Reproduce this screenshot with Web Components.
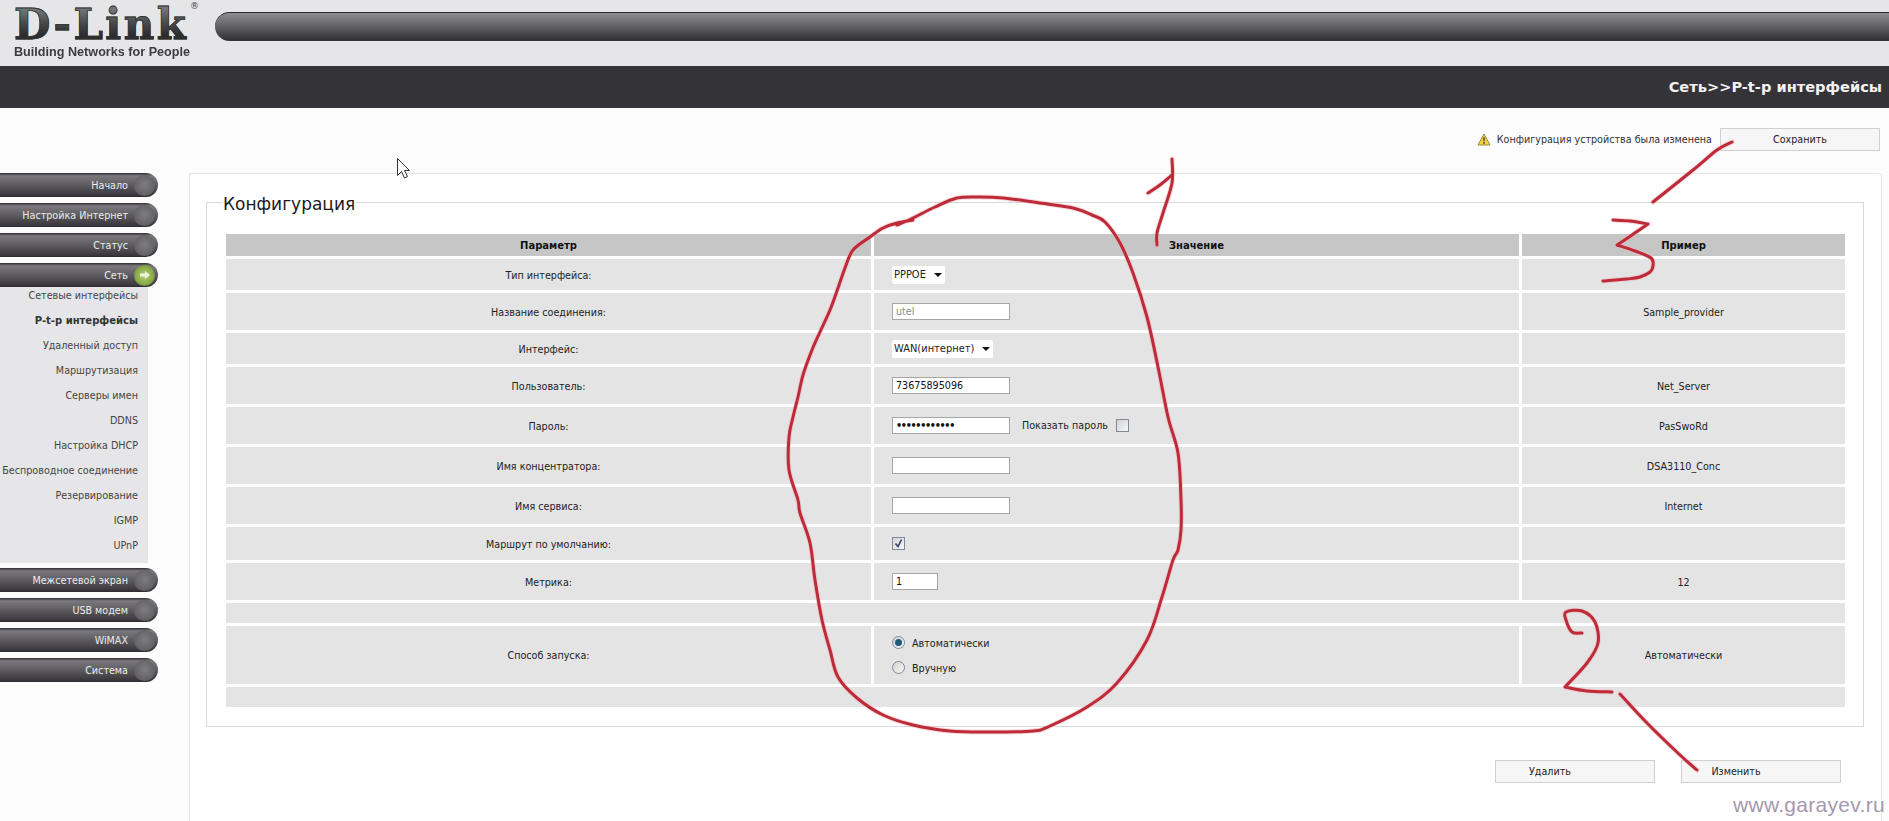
<!DOCTYPE html>
<html lang="ru">
<head>
<meta charset="utf-8">
<title>D-Link</title>
<style>
    html, body { margin: 0; height: 821px; overflow: hidden; background: #fcfcfc; }
    body { font: 9.6px "DejaVu Sans", sans-serif; color: #222; position: relative; }
    .page { display: grid; grid-template-columns: 189px 1fr; }
    .dots { font-weight: bold; letter-spacing: -1.3px; }
</style>
</head>
<body>
<router-header title="Сеть>>P-t-p интерфейсы"></router-header>
<div class="page">
    <side-menu>
        <nav-pill>Начало</nav-pill>
        <nav-pill>Настройка Интернет</nav-pill>
        <nav-pill>Статус</nav-pill>
        <nav-pill active>Сеть</nav-pill>
        <sub-menu>
            <sub-item>Сетевые интерфейсы</sub-item>
            <sub-item active>P-t-p интерфейсы</sub-item>
            <sub-item>Удаленный доступ</sub-item>
            <sub-item>Маршрутизация</sub-item>
            <sub-item>Серверы имен</sub-item>
            <sub-item>DDNS</sub-item>
            <sub-item>Настройка DHCP</sub-item>
            <sub-item>Беспроводное соединение</sub-item>
            <sub-item>Резервирование</sub-item>
            <sub-item>IGMP</sub-item>
            <sub-item>UPnP</sub-item>
        </sub-menu>
        <nav-pill>Межсетевой экран</nav-pill>
        <nav-pill>USB модем</nav-pill>
        <nav-pill>WiMAX</nav-pill>
        <nav-pill>Система</nav-pill>
    </side-menu>
    <config-page>
        <save-notice>Конфигурация устройства была изменена</save-notice>
        <config-panel legend="Конфигурация">
            <config-row head h="22" label="Параметр" example="Пример">Значение</config-row>
            <config-row h="31" label="Тип интерфейса:"><drop-down w="53">PPPOE</drop-down></config-row>
            <config-row h="37" label="Название соединения:" example="Sample_provider"><text-field muted>utel</text-field></config-row>
            <config-row h="31" label="Интерфейс:"><drop-down w="101">WAN(интернет)</drop-down></config-row>
            <config-row h="37" label="Пользователь:" example="Net_Server"><text-field>73675895096</text-field></config-row>
            <config-row h="37" label="Пароль:" example="PasSwoRd"><text-field><span class="dots">••••••••••••</span></text-field><span style="margin-left:12px">Показать пароль</span><check-box style="margin-left:8px"></check-box></config-row>
            <config-row h="37" label="Имя концентратора:" example="DSA3110_Conc"><text-field></text-field></config-row>
            <config-row h="37" label="Имя сервиса:" example="Internet"><text-field></text-field></config-row>
            <config-row h="33" label="Маршрут по умолчанию:"><check-box checked></check-box></config-row>
            <config-row h="37" label="Метрика:" example="12"><text-field w="46">1</text-field></config-row>
            <config-row h="20" wide></config-row>
            <config-row h="58" label="Способ запуска:" example="Автоматически">
                <radio-group>
                    <radio-option checked>Автоматически</radio-option>
                    <radio-option>Вручную</radio-option>
                </radio-group>
            </config-row>
            <config-row h="20" wide></config-row>
            <action-bar slot="actions">
                <action-button shifted>Удалить</action-button>
                <action-button shifted>Изменить</action-button>
            </action-bar>
        </config-panel>
    </config-page>
</div>
<ink-marks></ink-marks>
<site-mark>www.garayev.ru</site-mark>

<script>
class RouterHeader extends HTMLElement {
    constructor() {
        super();
        this.attachShadow({ mode: 'open' });
        this.shadowRoot.innerHTML = `
            <style>
                :host { display: block; }
                .top { height: 66px; background: #e6e6e8; display: flex; align-items: flex-start; box-sizing: border-box; }
                .logo { width: 215px; flex: none; box-sizing: border-box; padding: 0 0 0 14px; position: relative; }
                .word {
                    font: bold 42px/49px "DejaVu Serif", serif;
                    height: 44px;
                    letter-spacing: 2.4px;
                    background: linear-gradient(#77777a 20%, #4c4c4e 50%, #2c2c2e 80%);
                    -webkit-background-clip: text;
                    background-clip: text;
                    color: transparent;
                    -webkit-text-stroke: 0.8px #333;
                    white-space: nowrap;
                }
                .reg { position: absolute; left: 190px; top: 1px; font: 9px "DejaVu Sans", sans-serif; color: #444; }
                .tag {
                    font: bold 13.5px/15px "Liberation Sans", sans-serif;
                    color: #3c3c3e;
                    white-space: nowrap;
                    transform: scaleX(.935);
                    transform-origin: 0 0;
                }
                .pill {
                    flex: 1;
                    height: 29px;
                    margin-top: 12px;
                    border-radius: 15px 0 0 15px;
                    border-top: 1px solid #2a2a2c;
                    box-sizing: border-box;
                    background: linear-gradient(#8d8d90, #6a6a6c 40%, #333335 95%);
                }
                .title {
                    height: 42px;
                    background: #343438;
                    color: #f2f2f2;
                    font: bold 14.6px/42px "DejaVu Sans", sans-serif;
                    text-align: right;
                    padding-right: 7px;
                }
            </style>
            <div class="top">
                <div class="logo">
                    <div class="word">D-Link</div>
                    <span class="reg">®</span>
                    <div class="tag">Building Networks for People</div>
                </div>
                <div class="pill"></div>
            </div>
            <div class="title"></div>
        `;
    }

    connectedCallback() {
        this.shadowRoot.querySelector('.title').textContent = this.getAttribute('title');
    }
}

class SideMenu extends HTMLElement {
    constructor() {
        super();
        this.attachShadow({ mode: 'open' });
        this.shadowRoot.innerHTML = `
            <style>
                :host { display: block; padding-top: 65px; width: 158px; }
            </style>
            <slot></slot>
        `;
    }
}

class NavPill extends HTMLElement {
    constructor() {
        super();
        this.attachShadow({ mode: 'open' });
        this.shadowRoot.innerHTML = `
            <style>
                :host {
                    display: flex;
                    align-items: center;
                    justify-content: flex-end;
                    height: 24px;
                    margin-bottom: 6px;
                    padding-right: 3px;
                    box-sizing: border-box;
                    border-radius: 0 13px 13px 0;
                    background: linear-gradient(#2f2d31, #7b797d 12%, #6a686c 35%, #3a383c 92%, #2c2a2e);
                    color: #ececec;
                    font: 9.6px "DejaVu Sans", sans-serif;
                }
                :host([active]) { margin-bottom: 0; }
                .dot {
                    width: 21px;
                    height: 21px;
                    margin-left: 6px;
                    border-radius: 50%;
                    background: radial-gradient(circle at 50% 45%, #7d7c7f, #636165 70%, #504e52);
                    display: flex;
                    align-items: center;
                    justify-content: center;
                }
                :host([active]) .dot { background: radial-gradient(circle at 50% 50%, #b7d27a, #86a846 60%, #50702a); }
                svg { display: none; }
                :host([active]) svg { display: block; }
            </style>
            <slot></slot>
            <span class="dot"><svg width="12" height="10" viewBox="0 0 12 10"><path d="M1 3.5h5V1l5 4-5 4V6.5H1z" fill="#eef5d8"/></svg></span>
        `;
    }
}

class SubMenu extends HTMLElement {
    constructor() {
        super();
        this.attachShadow({ mode: 'open' });
        this.shadowRoot.innerHTML = `
            <style>
                :host { display: block; width: 148px; height: 276px; margin-bottom: 5px; background: #e6e6e8; box-sizing: border-box; padding-right: 10px; }
            </style>
            <slot></slot>
        `;
    }
}

class SubItem extends HTMLElement {
    constructor() {
        super();
        this.attachShadow({ mode: 'open' });
        this.shadowRoot.innerHTML = `
            <style>
                :host { display: block; height: 25px; line-height: 18px; text-align: right; color: #444; white-space: nowrap; }
                :host([active]) { font-weight: bold; font-size: 10px; color: #333; }
            </style>
            <slot></slot>
        `;
    }
}

class ConfigPage extends HTMLElement {
    constructor() {
        super();
        this.attachShadow({ mode: 'open' });
        this.shadowRoot.innerHTML = `
            <style>
                :host { display: block; padding: 20px 7px 0 0; }
            </style>
            <slot></slot>
        `;
    }
}

class SaveNotice extends HTMLElement {
    constructor() {
        super();
        this.attachShadow({ mode: 'open' });
        this.shadowRoot.innerHTML = `
            <style>
                :host { display: flex; align-items: center; justify-content: flex-end; height: 23px; margin-bottom: 22px; margin-right: 2px; color: #333; }
                svg { margin-right: 6px; }
                .msg { margin-right: 8px; }
            </style>
            <svg width="14" height="13" viewBox="0 0 14 13">
                <path d="M7 1L13 12H1z" fill="#f3d348" stroke="#9a8a3a" stroke-linejoin="round"/>
                <path d="M6.3 4.5h1.4l-.3 4h-.8zM6.3 9.3h1.4v1.4H6.3z" fill="#222"/>
            </svg>
            <span class="msg"><slot></slot></span>
            <action-button>Сохранить</action-button>
        `;
    }
}

class ConfigPanel extends HTMLElement {
    constructor() {
        super();
        this.attachShadow({ mode: 'open' });
        this.shadowRoot.innerHTML = `
            <style>
                :host {
                    display: block;
                    height: 648px;
                    box-sizing: border-box;
                    background: #fff;
                    border: 1px solid #e6e6e6;
                    border-bottom: 0;
                    border-radius: 3px 3px 0 0;
                    padding: 16px 17px 0 16px;
                }
                fieldset {
                    margin: 0;
                    padding: 20px 18px 19px 19px;
                    border: 1px solid #d9d9d9;
                    display: flex;
                    flex-direction: column;
                    gap: 3px;
                }
                legend {
                    font: 17px/20px "DejaVu Sans", sans-serif;
                    color: #1a1a1a;
                    padding: 4px 1px 0;
                    margin-left: -4px;
                }
            </style>
            <fieldset>
                <legend></legend>
                <slot></slot>
            </fieldset>
            <slot name="actions"></slot>
        `;
    }

    connectedCallback() {
        this.shadowRoot.querySelector('legend').textContent = this.getAttribute('legend');
    }
}

class ConfigRow extends HTMLElement {
    constructor() {
        super();
        this.attachShadow({ mode: 'open' });
        this.shadowRoot.innerHTML = `
            <style>
                :host {
                    display: grid;
                    grid-template-columns: 645px 645px 323px;
                    column-gap: 3px;
                    color: #222;
                }
                .cell { background: #e4e4e5; display: flex; align-items: center; justify-content: center; white-space: nowrap; }
                .label, .example { padding-top: 1px; box-sizing: border-box; }
                .value { justify-content: flex-start; padding-left: 18px; }
                :host([head]) { font-weight: bold; font-size: 10px; color: #111; }
                :host([head]) .cell { background: #c6c6c7; }
                :host([head]) .value { justify-content: center; padding: 1px 0 0; }
                :host([wide]) { grid-template-columns: 1fr; }
                :host([wide]) .value, :host([wide]) .example { display: none; }
            </style>
            <div class="cell label"></div>
            <div class="cell value"><slot></slot></div>
            <div class="cell example"></div>
        `;
    }

    connectedCallback() {
        this.style.height = this.getAttribute('h') + 'px';
        this.shadowRoot.querySelector('.label').textContent = this.getAttribute('label') || '';
        this.shadowRoot.querySelector('.example').textContent = this.getAttribute('example') || '';
    }
}

class DropDown extends HTMLElement {
    constructor() {
        super();
        this.attachShadow({ mode: 'open' });
        this.shadowRoot.innerHTML = `
            <style>
                :host { display: flex; align-items: center; justify-content: space-between; height: 18px; box-sizing: border-box; padding: 0 3px 0 2px; background: #fff; color: #222; font-size: 9.9px; border-radius: 2px; }
                i { width: 0; height: 0; border: 4px solid transparent; border-top: 4px solid #111; border-bottom: 0; }
            </style>
            <slot></slot><i></i>
        `;
    }

    connectedCallback() {
        this.style.width = this.getAttribute('w') + 'px';
    }
}

class TextField extends HTMLElement {
    constructor() {
        super();
        this.attachShadow({ mode: 'open' });
        this.shadowRoot.innerHTML = `
            <style>
                :host {
                    display: block;
                    width: 118px;
                    height: 17px;
                    line-height: 15px;
                    box-sizing: border-box;
                    padding-left: 3px;
                    background: #fff;
                    border: 1px solid #a6a6a6;
                    color: #111;
                }
                :host([muted]) { color: #8a8a8a; }
            </style>
            <slot></slot>
        `;
    }

    connectedCallback() {
        if (this.hasAttribute('w')) this.style.width = this.getAttribute('w') + 'px';
    }
}

class CheckBox extends HTMLElement {
    constructor() {
        super();
        this.attachShadow({ mode: 'open' });
        this.shadowRoot.innerHTML = `
            <style>
                :host { display: block; width: 13px; height: 13px; box-sizing: border-box; border: 1px solid #7f8a98; background: linear-gradient(135deg, #d4d4d6, #f6f6f6); }
                svg { display: none; }
                :host([checked]) svg { display: block; }
            </style>
            <svg width="11" height="11" viewBox="0 0 11 11"><path d="M2.5 5.5L5 8.5 8.5 1.5" fill="none" stroke="#2f4468" stroke-width="1.6"/></svg>
        `;
    }
}

class RadioGroup extends HTMLElement {
    constructor() {
        super();
        this.attachShadow({ mode: 'open' });
        this.shadowRoot.innerHTML = `
            <style>
                :host { display: flex; flex-direction: column; gap: 12px; }
            </style>
            <slot></slot>
        `;
    }
}

class RadioOption extends HTMLElement {
    constructor() {
        super();
        this.attachShadow({ mode: 'open' });
        this.shadowRoot.innerHTML = `
            <style>
                :host { display: flex; align-items: center; gap: 7px; height: 13px; }
                b { width: 13px; height: 13px; box-sizing: border-box; border-radius: 50%; border: 1px solid #7f8a98; background: linear-gradient(135deg, #d2d2d4, #f6f6f6); display: flex; align-items: center; justify-content: center; }
                :host([checked]) b::after { content: ""; width: 7px; height: 7px; border-radius: 50%; background: #1f5a78; }
                span { padding-top: 1px; }
            </style>
            <b></b><span><slot></slot></span>
        `;
    }
}

class ActionBar extends HTMLElement {
    constructor() {
        super();
        this.attachShadow({ mode: 'open' });
        this.shadowRoot.innerHTML = `
            <style>
                :host { display: flex; justify-content: flex-end; gap: 26px; margin-top: 33px; padding-right: 23px; }
            </style>
            <slot></slot>
        `;
    }
}

class ActionButton extends HTMLElement {
    constructor() {
        super();
        this.attachShadow({ mode: 'open' });
        this.shadowRoot.innerHTML = `
            <style>
                :host {
                    display: flex;
                    align-items: center;
                    justify-content: center;
                    width: 160px;
                    height: 23px;
                    box-sizing: border-box;
                    border: 1px solid #d0d0d0;
                    background: #f6f6f6;
                    color: #222;
                }
                :host([shifted]) { padding-right: 50px; }
            </style>
            <slot></slot>
        `;
    }
}

// hand drawn red marks from the screenshot, in page pixels
const INK_STROKES = [
    [[897,225],[913,218],[935,207],[957,198],[980,197],[1003,198],[1040,203],[1073,208],[1092,215],[1105,222],[1120,243],[1133,273],[1147,317],[1158,367],[1168,417],[1178,453],[1181,500],[1181,530],[1178,550],[1173,560],[1162,597],[1147,640],[1117,683],[1087,707],[1050,726],[1033,731],[990,732],[950,731],[913,725],[883,715],[857,698],[838,677],[830,650],[822,620],[815,580],[810,543],[800,513],[798,500],[789,470],[789,437],[793,417],[798,397],[803,375],[812,350],[820,332],[830,310],[838,288],[845,268],[853,250],[870,237],[883,228],[897,223],[913,220]],
    [[1148,193],[1160,185],[1172,175]],
    [[1172,159],[1172,183],[1163,213],[1157,233],[1157,245]],
    [[1613,220],[1630,221],[1648,224]],
    [[1648,224],[1632,235],[1617,245]],
    [[1617,245],[1635,251],[1651,258],[1653,266],[1650,272],[1640,277],[1627,279],[1603,281]],
    [[1732,142],[1717,150],[1693,170],[1653,202]],
    [[1582,633],[1572,632],[1566,620],[1566,612],[1582,611],[1595,622],[1598,643],[1587,663],[1565,687]],
    [[1565,687],[1587,691],[1612,692]],
    [[1620,694],[1647,723],[1680,755],[1697,770]]
];

// catmull-rom through the points, so the marks look drawn by hand
function inkPath(pts) {
    let d = `M${pts[0][0]} ${pts[0][1]}`;
    for (let i = 0; i < pts.length - 1; i++) {
        const p0 = pts[i - 1] || pts[i], p1 = pts[i], p2 = pts[i + 1], p3 = pts[i + 2] || p2;
        const c1x = p1[0] + (p2[0] - p0[0]) / 6, c1y = p1[1] + (p2[1] - p0[1]) / 6;
        const c2x = p2[0] - (p3[0] - p1[0]) / 6, c2y = p2[1] - (p3[1] - p1[1]) / 6;
        d += `C${c1x.toFixed(1)} ${c1y.toFixed(1)} ${c2x.toFixed(1)} ${c2y.toFixed(1)} ${p2[0]} ${p2[1]}`;
    }
    return d;
}

class InkMarks extends HTMLElement {
    constructor() {
        super();
        this.attachShadow({ mode: 'open' });
        const d = INK_STROKES.map(inkPath).join('');
        this.shadowRoot.innerHTML = `
            <style>
                :host { position: absolute; left: 0; top: 0; pointer-events: none; }
                svg { display: block; }
                .line { fill: none; stroke-linejoin: round; stroke-linecap: round; }
                .halo { stroke: #f2b4ba; stroke-width: 5; stroke-opacity: .5; }
                .ink { stroke: #bd2a38; stroke-width: 3; }
            </style>
            <svg width="1889" height="821" viewBox="0 0 1889 821">
                <path class="line halo" d="${d}"/>
                <path class="line ink" d="${d}"/>
                <path d="M397.5 158.5V175.5L401.5 171.5 404.5 178 407.5 176.5 404.5 170.5H409.5Z" fill="#fff" stroke="#333"/>
            </svg>
        `;
    }
}

class SiteMark extends HTMLElement {
    constructor() {
        super();
        this.attachShadow({ mode: 'open' });
        this.shadowRoot.innerHTML = `
            <style>
                :host {
                    position: absolute;
                    right: 4px;
                    bottom: 3px;
                    font: 21px/26px "Liberation Sans", sans-serif;
                    letter-spacing: .3px;
                    color: #a698ae;
                }
            </style>
            <slot></slot>
        `;
    }
}

customElements.define('router-header', RouterHeader);
customElements.define('side-menu', SideMenu);
customElements.define('nav-pill', NavPill);
customElements.define('sub-menu', SubMenu);
customElements.define('sub-item', SubItem);
customElements.define('config-page', ConfigPage);
customElements.define('save-notice', SaveNotice);
customElements.define('config-panel', ConfigPanel);
customElements.define('config-row', ConfigRow);
customElements.define('drop-down', DropDown);
customElements.define('text-field', TextField);
customElements.define('check-box', CheckBox);
customElements.define('radio-group', RadioGroup);
customElements.define('radio-option', RadioOption);
customElements.define('action-bar', ActionBar);
customElements.define('action-button', ActionButton);
customElements.define('ink-marks', InkMarks);
customElements.define('site-mark', SiteMark);
</script>
</body>
</html>
